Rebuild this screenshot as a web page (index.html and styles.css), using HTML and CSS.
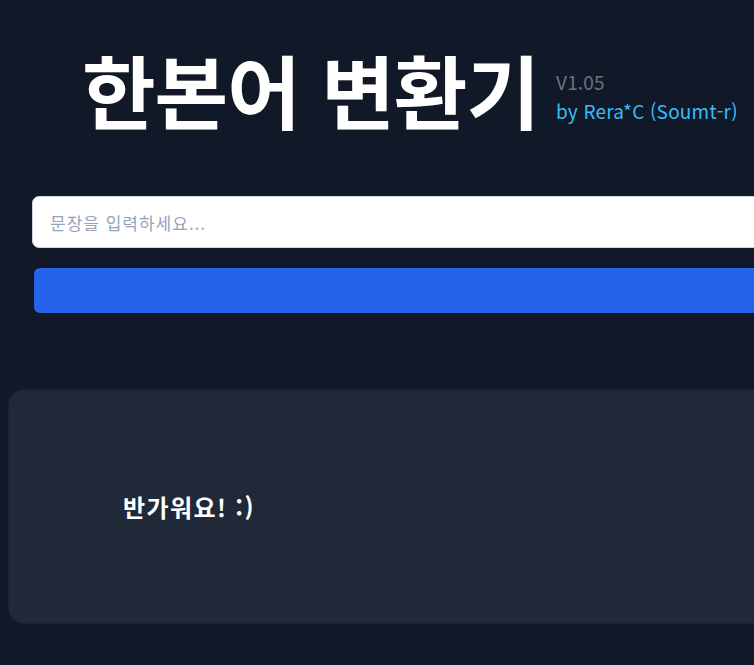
FILE: index.html
```html
<!DOCTYPE html>
<html lang="ko">
<head>
    <meta charset="UTF-8">
    <meta name="viewport" content="width=device-width, initial-scale=1.0">
    <title>한본어 변환기</title>
    <link rel="stylesheet" href="styles.css">
</head>
<body>
    <div class="page">
        <header class="header">
            <h1 class="title">한본어 변환기</h1>
            <div class="meta">
                <span class="version">V1.05</span>
                <span class="author">by Rera*C (Soumt-r)</span>
            </div>
        </header>

        <div class="controls">
            <input type="text" class="text-input" placeholder="문장을 입력하세요...">
            <button class="convert-btn"></button>
        </div>

        <div class="result-card">
            <p class="result-text">반가워요! :)</p>
        </div>
    </div>
</body>
</html>
```

FILE: styles.css
```css
:root {
    --bg: #111827;
    --card: #1f2937;
    --primary: #2563eb;
    --muted: #6b7280;
    --accent: #38bdf8;
}
html, body {
    overflow-x: hidden;
}
body {
    margin: 0;
    background: var(--bg);
    color: white;
    font-family: 'Noto Sans CJK KR', 'Noto Sans', sans-serif;
}
.page {
    width: 920px;
    padding: 0 8px;
}
.header {
    display: flex;
    align-items: center;
    padding: 36px 0 0 74px;
    height: 140px;
    box-sizing: border-box;
}
.title {
    margin: 0;
    font-size: 80px;
    font-weight: 700;
    line-height: 1;
    letter-spacing: -1px;
}
.meta {
    display: flex;
    flex-direction: column;
    margin-left: 17px;
    margin-top: 16px;
    font-size: 19px;
    line-height: 29px;
    letter-spacing: 0.2px;
}
.version {
    color: var(--muted);
}
.author {
    color: var(--accent);
}
.controls {
    display: flex;
    flex-direction: column;
    gap: 19px;
    padding: 56px 0 0 24px;
}
.text-input {
    height: 52px;
    padding: 0 17px;
    border: 1px solid #cbd5e1;
    border-radius: 7px;
    background: white;
    font-family: inherit;
    font-size: 17px;
    letter-spacing: 1px;
    box-sizing: border-box;
}
.text-input::placeholder {
    color: #94a3b8;
}
.convert-btn {
    height: 47px;
    margin-left: 1px;
    border: 1px solid #0b1220;
    border-radius: 7px;
    background: var(--primary);
    cursor: pointer;
}
.result-card {
    display: flex;
    align-items: center;
    height: 235px;
    margin-top: 75px;
    padding-left: 114px;
    border: 1px solid #1a2230;
    border-radius: 16px;
    background: var(--card);
    box-sizing: border-box;
}
.result-text {
    margin: 0;
    font-size: 24px;
    font-weight: 700;
    letter-spacing: 1.4px;
}
```
